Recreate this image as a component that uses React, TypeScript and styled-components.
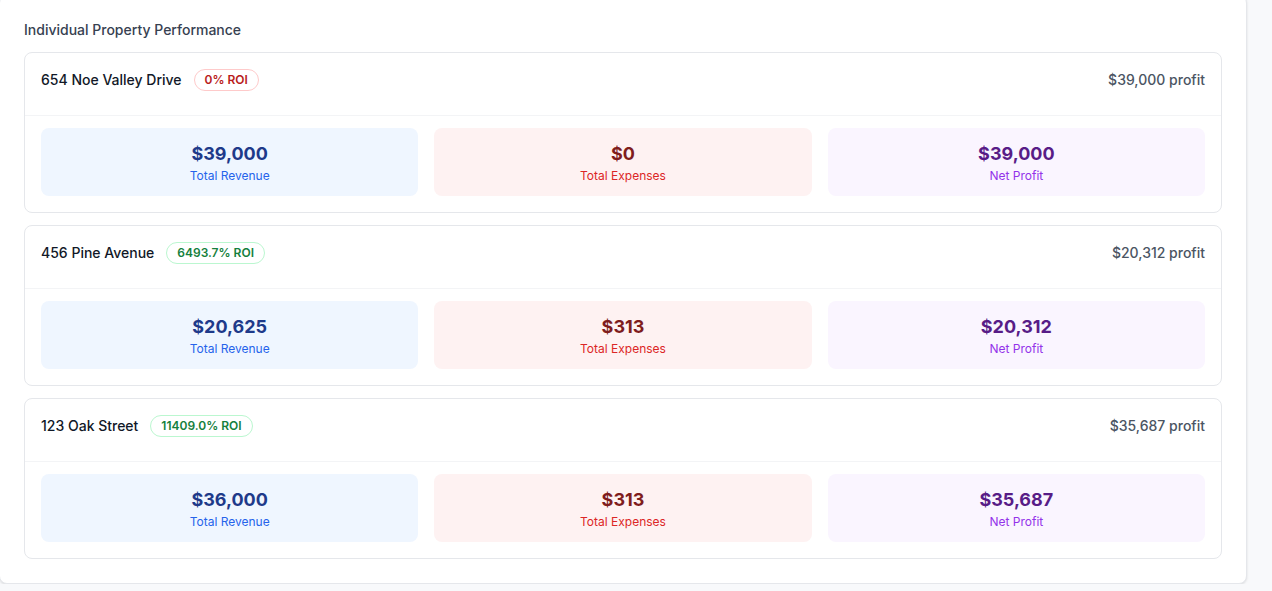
import React from "react";
import styled, { createGlobalStyle } from "styled-components";

const Global = createGlobalStyle`
  html, body { margin: 0; padding: 0; background: #f8f9fb; }
  body { font-family: Inter, "Noto Sans", Arial, sans-serif; overflow: hidden; }
  * { box-sizing: border-box; }
`;

const Panel = styled.section`
  margin: -5px 0 0 -1px;
  width: 1248px;
  background: #ffffff;
  border: 1px solid #e5e7eb;
  border-radius: 8px;
  box-shadow: 0 1px 3px rgba(0, 0, 0, 0.08), 0 1px 2px rgba(0, 0, 0, 0.04);
  padding: 24px;
`;

const Title = styled.h3`
  margin: 0 0 12px;
  font-size: 14px;
  line-height: 20px;
  font-weight: 500;
  color: #374151;
`;

const List = styled.div`
  display: flex;
  flex-direction: column;
  gap: 12px;
`;

const Card = styled.div`
  border: 1px solid #e5e7eb;
  border-radius: 8px;
  background: #fff;
`;

const Header = styled.div`
  display: flex;
  align-items: center;
  justify-content: space-between;
  height: 63px;
  padding: 16px 16px 24px;
  border-bottom: 1px solid #f3f4f6;
`;

const NameGroup = styled.div`
  display: flex;
  align-items: center;
  gap: 12px;
`;

const Name = styled.span`
  font-size: 14px;
  line-height: 20px;
  font-weight: 500;
  color: #111827;
`;

const Badge = styled.span<{ $tone: "red" | "green" }>`
  display: inline-flex;
  align-items: center;
  padding: 2px 10px;
  border-radius: 9999px;
  font-size: 12px;
  line-height: 16px;
  font-weight: 600;
  border: 1px solid ${(p) => (p.$tone === "red" ? "#fecaca" : "#bbf7d0")};
  color: ${(p) => (p.$tone === "red" ? "#b91c1c" : "#15803d")};
  background: #fff;
`;

const Profit = styled.span`
  font-size: 14px;
  line-height: 20px;
  font-weight: 500;
  color: #4b5563;
`;

const Body = styled.div`
  display: grid;
  grid-template-columns: repeat(3, 1fr);
  gap: 16px;
  padding: 12px 16px 16px;
`;

const palette = {
  blue: { bg: "#eff6ff", value: "#1e3a8a", label: "#2563eb" },
  red: { bg: "#fef2f2", value: "#7f1d1d", label: "#dc2626" },
  purple: { bg: "#faf5ff", value: "#581c87", label: "#9333ea" },
};
type Tone = keyof typeof palette;

const Stat = styled.div<{ $tone: Tone }>`
  background: ${(p) => palette[p.$tone].bg};
  border-radius: 8px;
  padding: 12px;
  text-align: center;
`;

const StatValue = styled.div<{ $tone: Tone }>`
  font-size: 18px;
  line-height: 28px;
  font-weight: 700;
  color: ${(p) => palette[p.$tone].value};
`;

const StatLabel = styled.div<{ $tone: Tone }>`
  font-size: 12px;
  line-height: 16px;
  color: ${(p) => palette[p.$tone].label};
`;

const properties = [
  { name: "654 Noe Valley Drive", roi: "0% ROI", tone: "red" as const, revenue: "$39,000", expenses: "$0", profit: "$39,000" },
  { name: "456 Pine Avenue", roi: "6493.7% ROI", tone: "green" as const, revenue: "$20,625", expenses: "$313", profit: "$20,312" },
  { name: "123 Oak Street", roi: "11409.0% ROI", tone: "green" as const, revenue: "$36,000", expenses: "$313", profit: "$35,687" },
];

export default function App() {
  return (
    <>
      <Global />
      <Panel>
        <Title>Individual Property Performance</Title>
        <List>
          {properties.map((p) => (
            <Card key={p.name}>
              <Header>
                <NameGroup>
                  <Name>{p.name}</Name>
                  <Badge $tone={p.tone}>{p.roi}</Badge>
                </NameGroup>
                <Profit>{p.profit} profit</Profit>
              </Header>
              <Body>
                <Stat $tone="blue">
                  <StatValue $tone="blue">{p.revenue}</StatValue>
                  <StatLabel $tone="blue">Total Revenue</StatLabel>
                </Stat>
                <Stat $tone="red">
                  <StatValue $tone="red">{p.expenses}</StatValue>
                  <StatLabel $tone="red">Total Expenses</StatLabel>
                </Stat>
                <Stat $tone="purple">
                  <StatValue $tone="purple">{p.profit}</StatValue>
                  <StatLabel $tone="purple">Net Profit</StatLabel>
                </Stat>
              </Body>
            </Card>
          ))}
        </List>
      </Panel>
    </>
  );
}
